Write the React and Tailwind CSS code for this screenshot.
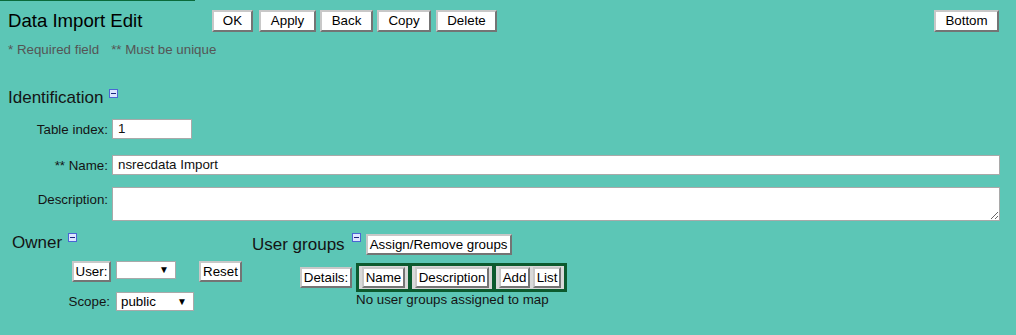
import React from "react";

function Btn({ className = "", children }) {
  return (
    <div
      className={
        "flex shrink-0 items-center justify-center bg-white border-2 border-t-[#c8c8c8] border-l-[#c8c8c8] border-b-[#747474] border-r-[#747474] text-[13.333px] leading-none text-black " +
        className
      }
    >
      {children}
    </div>
  );
}

function Minus({ className = "" }) {
  return (
    <div
      className={
        "flex h-[9px] w-[9px] shrink-0 items-center justify-center border border-[#4a66d4] bg-[#dde5ff] " +
        className
      }
    >
      <div className="h-px w-[5px] bg-[#1c2580]" />
    </div>
  );
}

function FakeSelect({ className = "", children }) {
  return (
    <div
      className={
        "flex shrink-0 items-center justify-between border border-[#a9a9a9] bg-white pl-[4px] pr-[6px] text-[13.333px] leading-none text-black " +
        className
      }
    >
      <span>{children}</span>
      <span className="text-[10px] leading-none">▼</span>
    </div>
  );
}

export default function App() {
  return (
    <div className="min-h-[335px] w-full bg-[#5cc6b6] font-['Liberation_Sans',Arial,sans-serif] text-[13.333px] text-[#141414]">
      <div className="h-px w-[195px] bg-[#0b6a3a]" />

      {/* Title row */}
      <div className="mt-[9px] flex items-center pl-[8px] pr-[17px]">
        <div className="w-[204px] text-[18.6px] leading-[20px] text-black">Data Import Edit</div>
        <div className="flex">
          <Btn className="h-[22px] w-[41px]">OK</Btn>
          <Btn className="ml-[6px] h-[22px] w-[57px]">Apply</Btn>
          <Btn className="ml-[4px] h-[22px] w-[53px]">Back</Btn>
          <Btn className="ml-[4px] h-[22px] w-[54px]">Copy</Btn>
          <Btn className="ml-[5px] h-[22px] w-[61px]">Delete</Btn>
        </div>
        <div className="ml-auto">
          <Btn className="h-[22px] w-[65px]">Bottom</Btn>
        </div>
      </div>

      <div className="mt-[10px] pl-[8px] leading-[15px] text-[#555]">
        <span>* Required field</span>
        <span className="ml-[12px]">** Must be unique</span>
      </div>

      {/* Identification */}
      <div className="mt-[31px] flex items-start pl-[8px]">
        <div className="text-[17px] leading-[20px]">Identification</div>
        <Minus className="ml-[6px] mt-px" />
      </div>

      <div className="mt-[11px] flex items-center pr-[16px]">
        <div className="w-[108px] text-right leading-[15px]">Table index:</div>
        <div className="ml-[4px] flex h-[20px] w-[80px] items-center border border-[#a9a9a9] bg-white px-[5px] text-[#111]">
          1
        </div>
      </div>

      <div className="mt-[16px] flex items-center pr-[16px]">
        <div className="w-[108px] text-right leading-[15px]">** Name:</div>
        <div className="ml-[4px] flex h-[20px] flex-1 items-center border border-[#a9a9a9] bg-white px-[5px] text-[#111]">
          nsrecdata Import
        </div>
      </div>

      <div className="mt-[12px] flex items-start pr-[16px]">
        <div className="w-[108px] pt-[5px] text-right leading-[15px]">Description:</div>
        <textarea
          readOnly
          className="ml-[4px] block h-[34px] flex-1 border border-[#a9a9a9] bg-white outline-none"
          defaultValue=""
        />
      </div>

      {/* Owner + User groups */}
      <div className="mt-[12px] flex">
        <div className="ml-[12px] w-[240px] shrink-0">
          <div className="flex items-start">
            <div className="text-[17px] leading-[20px]">Owner</div>
            <Minus className="ml-[6px]" />
          </div>
          <div className="mt-[8px] flex items-start">
            <div className="flex w-[99px] justify-end">
              <Btn className="h-[21px] w-[39px]">User:</Btn>
            </div>
            <FakeSelect className="ml-[5px] h-[18px] w-[60px]" />
            <Btn className="ml-[23px] h-[21px] w-[43px]">Reset</Btn>
          </div>
          <div className="mt-[10px] flex items-center">
            <div className="w-[98px] text-right leading-[15px]">Scope:</div>
            <FakeSelect className="ml-[6px] h-[19px] w-[78px]">public</FakeSelect>
          </div>
        </div>

        <div className="shrink-0">
          <div className="flex items-start">
            <div className="mt-[2px] text-[17px] leading-[20px]">User groups</div>
            <Minus className="ml-[7px]" />
            <Btn className="ml-[5px] mt-px h-[21px] w-[146px]">Assign/Remove groups</Btn>
          </div>
          <div className="mt-[8px] flex items-center">
            <Btn className="ml-[48px] h-[21px] w-[52px]">Details:</Btn>
            <div className="ml-[4px] flex gap-[4px] border-[3px] border-[#0c5a2e] bg-[#0c5a2e]">
              <div className="flex bg-[#d9d9d9] px-[3px] py-px">
                <Btn className="h-[21px] w-[43px]">Name</Btn>
              </div>
              <div className="flex bg-[#d9d9d9] px-[3px] py-px">
                <Btn className="h-[21px] w-[74px]">Description</Btn>
              </div>
              <div className="flex gap-[3px] bg-[#d9d9d9] px-[3px] py-px">
                <Btn className="h-[21px] w-[31px]">Add</Btn>
                <Btn className="h-[21px] w-[28px]">List</Btn>
              </div>
            </div>
          </div>
          <div className="ml-[104px] leading-[15px]">No user groups assigned to map</div>
        </div>
      </div>
    </div>
  );
}
